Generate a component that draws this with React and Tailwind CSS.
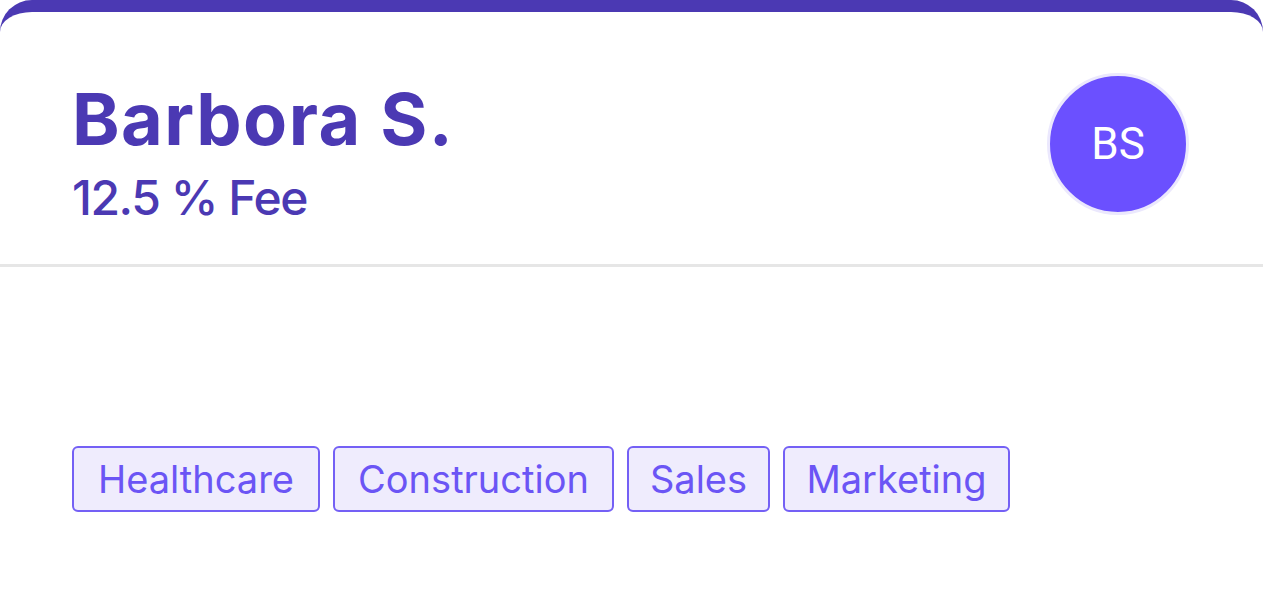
const TAGS = [
  { label: 'Healthcare', w: 'w-[248px]' },
  { label: 'Construction', w: 'w-[281px]' },
  { label: 'Sales', w: 'w-[143px]' },
  { label: 'Marketing', w: 'w-[227px]' },
]

export default function App() {
  return (
    <div className="min-h-screen bg-white font-['Inter',sans-serif]">
      <div className="rounded-t-[32px] border-t-[12px] border-[#4b39b3] bg-white min-h-[591px]">
        {/* Header */}
        <div className="flex items-start justify-between pl-[72px] pr-[74px] pt-[61px] pb-[42px] border-b-[3px] border-[#e6e6e6]">
          <div className="mt-[10px] flex flex-col">
            <h1 className="text-[72px] leading-none font-bold tracking-[0.02em] text-[#4b39b3]">Barbora S.</h1>
            <p className="mt-[19px] text-[48px] leading-none font-medium tracking-[-0.03em] text-[#4b39b3]">12.5 % Fee</p>
          </div>
          <div className="w-[142px] h-[142px] rounded-full border-[3px] border-[#ebe8fd] bg-[#6b50ff] flex items-center justify-center">
            <span className="text-[44px] font-normal text-white font-['Roboto',sans-serif]">BS</span>
          </div>
        </div>

        {/* Tags */}
        <div className="flex gap-[13px] px-[72px] pt-[179px]">
          {TAGS.map(({ label, w }) => (
            <span
              key={label}
              className={`${w} h-[66px] flex items-center justify-center rounded-[6px] border-2 border-[#7460f5] bg-[#efecfd] text-[38px] text-[#6b55f5]`}
            >
              {label}
            </span>
          ))}
        </div>
      </div>
    </div>
  )
}
